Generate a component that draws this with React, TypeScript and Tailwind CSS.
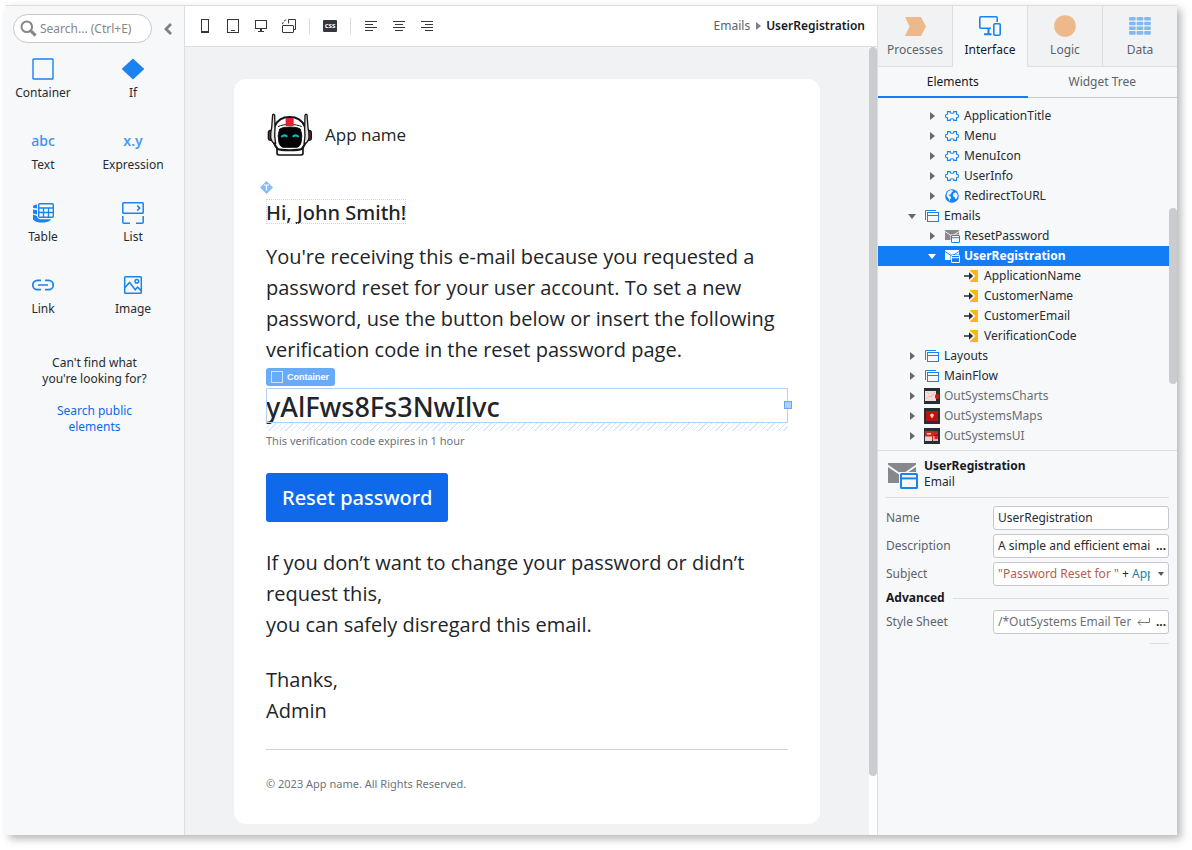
import { useState } from "react";
import type { ReactNode } from "react";

const BLUE = "#1a83f0";

/* ---------- Toolbox icons ---------- */

const ContainerIcon = () => (
  <svg width="22" height="22" viewBox="0 0 22 22" fill="none">
    <rect x="1" y="1" width="20" height="20" rx="0.6" stroke={BLUE} strokeWidth="1.4" />
  </svg>
);

const IfIcon = () => (
  <svg width="24" height="22" viewBox="0 0 24 22">
    <path d="M12 0.4 23.3 11 12 21.6 0.7 11Z" fill={BLUE} />
  </svg>
);

const TableIcon = () => (
  <svg width="22" height="22" viewBox="0 0 22 22" fill="none">
    <path d="M5 2.6C3 3 1 3.600 1 4.600v1.200l4 .8ZM5 8.200 1 7.600v4l4 .8ZM5 14l-4-1.400v4.800C3 20 8 20.800 11 20.500c3.400 0 7-1 8-3.200H8.500C6.500 17 5 16 5 14Z" fill={BLUE} />
    <rect x="6.700" y="1.700" width="14.600" height="13.600" rx="1" fill="#f6f8fa" stroke={BLUE} strokeWidth="1.400" />
    <path d="M7 6h14M7 10.500h14M11.500 6v9M16.500 6v9" stroke={BLUE} strokeWidth="1.300" />
  </svg>
);

const ListIcon = () => (
  <svg width="22" height="22" viewBox="0 0 22 22" fill="none" stroke={BLUE} strokeWidth="1.500">
    <rect x="0.800" y="0.800" width="20.400" height="10.400" rx="0.800" />
    <path d="m15.200 3.600 2.500 2.500-2.500 2.500" />
    <path d="M.800 14v6.200q0 1 1 1H8M21.200 14v6.200q0 1-1 1H14" />
  </svg>
);

const LinkIcon = () => (
  <svg width="22" height="12" viewBox="0 0 22 12" fill="none" stroke={BLUE} strokeWidth="1.700">
    <path d="M9 1.300H5.500a4.700 4.700 0 0 0 0 9.400H9M13 1.300h3.500a4.700 4.700 0 0 1 0 9.400H13M6 6h10" />
  </svg>
);

const ImageIcon = () => (
  <svg width="20" height="20" viewBox="0 0 20 20" fill="none" stroke={BLUE} strokeWidth="1.500">
    <rect x="1.700" y="1.700" width="16.600" height="16.600" rx="0.800" />
    <circle cx="13.800" cy="6.200" r="1.800" />
    <path d="m2 12.500 4.600-5 5.700 7.200 2.200-2.600 3.800 3.500" />
  </svg>
);

const tools: { label: string; icon: ReactNode }[] = [
  { label: "Container", icon: <ContainerIcon /> },
  { label: "If", icon: <IfIcon /> },
  { label: "Text", icon: <span className="text-sm font-medium text-[#3d92ee]">abc</span> },
  { label: "Expression", icon: <span className="text-sm font-semibold text-[#4b9af0]">x.y</span> },
  { label: "Table", icon: <TableIcon /> },
  { label: "List", icon: <ListIcon /> },
  { label: "Link", icon: <LinkIcon /> },
  { label: "Image", icon: <ImageIcon /> },
];

function Toolbox() {
  return (
    <aside className="w-[180px] shrink-0 border-r border-[#dcdee0] bg-[#f6f8fa]">
      <div className="flex items-center gap-2 pl-2 pt-2">
        <label className="flex h-[29px] w-[139px] items-center rounded-full border border-[#c6c8cb] bg-white pl-1.5">
          <svg width="17" height="17" viewBox="0 0 17 17" fill="none" stroke="#868789">
            <circle cx="6.800" cy="6.800" r="5.300" strokeWidth="2" />
            <path d="m10.600 10.600 5 5" strokeWidth="3" />
          </svg>
          <input
            type="text"
            aria-label="Search elements"
            placeholder="Search... (Ctrl+E)"
            className="ml-[3px] w-[108px] bg-transparent text-xs text-[#333] outline-none placeholder:text-[#85878a]"
          />
        </label>
        <button type="button" aria-label="Collapse toolbox" className="flex h-6 w-4 items-center justify-center">
          <svg width="10" height="12" viewBox="0 0 10 12" fill="none" stroke="#7e8082" strokeWidth="2.800">
            <path d="M8 1 3 6l5 5" />
          </svg>
        </button>
      </div>
      <div className="mt-3.5 grid grid-cols-[76px_76px] gap-x-3.5 gap-y-7">
        {tools.map((t) => (
          <button key={t.label} type="button" className="flex flex-col items-center gap-1">
            <span className="flex h-6 items-center justify-center">{t.icon}</span>
            <span className="text-xs leading-4 text-[#272b30]">{t.label}</span>
          </button>
        ))}
      </div>
      <p className="mt-[38px] text-center text-xs leading-4 text-[#272b30]">
        Can't find what
        <br />
        you're looking for?
      </p>
      <p className="mt-4 text-center text-xs leading-4">
        <a href="#public" className="text-[#1068eb]">
          Search public
          <br />
          elements
        </a>
      </p>
    </aside>
  );
}

/* ---------- Toolbar ---------- */

const PhoneIcon = () => (
  <svg width="8" height="14" viewBox="0 0 8 14">
    <path d="M0 0h8v14H0ZM1 1v11h6V1Z" fillRule="evenodd" fill="#34373b" />
  </svg>
);
const TabletIcon = () => (
  <svg width="12" height="14" viewBox="0 0 12 14">
    <path d="M0 0h12v14H0ZM1 1v12h10V1ZM4 11h4v1H4Z" fillRule="evenodd" fill="#34373b" />
  </svg>
);
const DesktopIcon = () => (
  <svg width="12" height="12" viewBox="0 0 12 12" fill="#34373b">
    <path d="M0 0h12v9H0ZM1 1v7h10V1Z" fillRule="evenodd" />
    <path d="M5 9h2v2h2v1H3v-1h2Z" />
  </svg>
);
const OrientationIcon = () => (
  <svg width="14" height="14" viewBox="0 0 14 14" fill="none" stroke="#34373b">
    <rect x="0.500" y="6.500" width="11" height="7" rx="0.500" />
    <path d="M6.500 4.500v-4h7v10H12" />
    <path d="M.500 5.200C.800 3 2.500 1.200 4.800.600" strokeDasharray="2.500 1" />
  </svg>
);
const CssIcon = () => (
  <svg width="14" height="12" viewBox="0 0 14 12">
    <rect width="14" height="12" rx="1" fill="#34373b" />
    <text x="7" y="8" textAnchor="middle" fontSize="6" fontWeight="800" fill="#fff" fontFamily="Noto Sans, sans-serif">
      CSS
    </text>
  </svg>
);
const AlignIcon = ({ starts }: { starts: number }) => (
  <svg width="12" height="10" viewBox="0 0 12 10" fill="#34373b">
    <path d={`M0 0h12v1H0ZM${starts} 3h8v1h-8ZM0 6h12v1H0ZM${starts} 9h8v1h-8Z`} />
  </svg>
);

function ToolButton({ label, children }: { label: string; children: ReactNode }) {
  return (
    <button type="button" aria-label={label} className="flex h-7 w-7 items-center justify-center">
      {children}
    </button>
  );
}
const Separator = () => (
  <span className="flex w-[13px] justify-center">
    <span className="h-4 w-px bg-[#d9dbdd]" />
  </span>
);

function Toolbar() {
  return (
    <div className="flex h-[41px] items-center border-b border-[#dcdee0] bg-white pl-1.5 pr-3">
      <ToolButton label="Phone"><PhoneIcon /></ToolButton>
      <ToolButton label="Tablet"><TabletIcon /></ToolButton>
      <ToolButton label="Desktop"><DesktopIcon /></ToolButton>
      <ToolButton label="Rotate"><OrientationIcon /></ToolButton>
      <Separator />
      <ToolButton label="Style sheet"><CssIcon /></ToolButton>
      <Separator />
      <ToolButton label="Align left"><AlignIcon starts={0} /></ToolButton>
      <ToolButton label="Align center"><AlignIcon starts={2} /></ToolButton>
      <ToolButton label="Align right"><AlignIcon starts={4} /></ToolButton>
      <nav aria-label="Breadcrumb" className="ml-auto flex items-center text-xs">
        <a href="#emails" className="text-[#5d6269]">Emails</a>
        <svg className="ml-1.5 mr-[5px]" width="5" height="8" viewBox="0 0 5 8">
          <path d="M0 0 5 4 0 8Z" fill="#7c8187" />
        </svg>
        <span className="font-semibold text-[#16191d]">UserRegistration</span>
      </nav>
    </div>
  );
}

/* ---------- Email canvas ---------- */

const RobotLogo = () => (
  <svg width="46" height="44" viewBox="0 0 138 132" stroke="#151515" strokeLinejoin="round">
    <rect x="4" y="52" width="14" height="30" rx="7" fill="#8f2028" strokeWidth="4" />
    <rect x="119" y="52" width="14" height="30" rx="7" fill="#8f2028" strokeWidth="4" />
    <path d="M30 104v17q0 5 6 5h66q6 0 6-5v-17Z" fill="#fff" strokeWidth="5" />
    <path d="M68 12c22 0 37 9 45 28 9 26 7 50-9 68-10 5-62 5-72 0C16 90 14 66 23 40c8-19 23-28 45-28Z" fill="#fff" strokeWidth="6" />
    <path d="M33 41c16-9 54-9 71 0" fill="none" strokeWidth="3" />
    <path d="M56 15h24v24H56Z" fill="#dd2430" stroke="none" />
    <path d="M17 5q4-3 6 2l1 40q-3 22 2 46-13-4-15-20-1-16 3-28ZM120 5q-4-3-6 2l-1 40q3 22-2 46 13-4 15-20 1-16-3-28Z" fill="#e4e4e4" strokeWidth="4" />
    <path d="M38 48q8-6 31-6t31 6q8 20 2 41-4 14-15 14H51q-11 0-15-14-6-21 2-41Z" fill="#020304" strokeWidth="3" />
    <path d="M43 72q9-9 18-1M77 71q9-8 18 1" fill="none" stroke="#16b9c4" strokeWidth="6" />
  </svg>
);

function EmailCard() {
  return (
    <article className="mx-auto w-full max-w-[586px] rounded-xl bg-white px-8 pb-[30px] pt-8 font-['Open_Sans','Noto_Sans',sans-serif] text-xl leading-[31px] text-[#212529]">
      <header className="flex h-12 items-center gap-3 pl-px">
        <RobotLogo />
        <span className="text-[17px] leading-6">App name</span>
      </header>

      <div className="relative mt-10">
        <svg className="absolute -left-1.5 -top-[18px]" width="13" height="13" viewBox="0 0 13 13">
          <path d="M6.500 0 13 6.500 6.500 13 0 6.500Z" fill="#86bcf8" />
          <path d="M4 4h5M6.500 4v5.500" stroke="#fff" strokeWidth="1.200" />
        </svg>
        <h1 className="h-[25px] w-fit font-['Noto_Sans',sans-serif] text-xl font-medium leading-7 outline-1 -outline-offset-1 outline-dotted outline-[#cfd1d4]">
          Hi, John Smith!
        </h1>
      </div>

      <p className="mt-[17px]">
        You're receiving this e-mail because you requested a password reset for your user account. To set a new
        password, use the button below or insert the following verification code in the reset password page.
      </p>

      <div className="relative mt-[23px]">
        <span className="absolute -top-5 left-0 flex h-[18px] w-[69px] items-center gap-1 rounded-[3px] bg-[#6aabf7] pl-[5px] font-['Liberation_Sans',sans-serif] text-[9px] font-bold text-white">
          <span className="h-3 w-3 border border-[#cfe4fd]" />
          Container
        </span>
        <div className="h-[35px] font-['Noto_Sans',sans-serif] text-[27px] font-medium leading-[38px] outline-1 -outline-offset-1 outline-solid outline-[#aed2fb]">
          yAlFws8Fs3NwIlvc
        </div>
        <span className="absolute -right-1 top-[13px] h-2 w-2 border border-[#67a8f5] bg-[#aed2fb]" />
        <div className="h-2 bg-[repeating-linear-gradient(135deg,#fff_0_3px,#d5e8fd_3px_4px)]" />
      </div>
      <p className="font-['Noto_Sans',sans-serif] text-[11px] leading-5 text-[#6c757d]">
        This verification code expires in 1 hour
      </p>

      <button type="button" className="mt-[22px] block h-[49px] rounded-[3px] bg-[#1068eb] px-4 font-['Noto_Sans',sans-serif] text-xl font-medium text-white">
        Reset password
      </button>

      <p className="mt-[25px]">
        If you don’t want to change your password or didn’t request this,
        <br />
        you can safely disregard this email.
      </p>
      <p className="mt-6">
        Thanks,
        <br />
        Admin
      </p>
      <hr className="mt-[23px] border-[#cfd1d4]" />
      <footer className="mt-6 font-['Noto_Sans',sans-serif] text-[11px] leading-5 text-[#6c757d]">
        © 2023 App name. All Rights Reserved.
      </footer>
    </article>
  );
}

/* ---------- Right panel ---------- */

const layerIcons: Record<string, ReactNode> = {
  Processes: (
    <svg width="21" height="19" viewBox="0 0 21 19">
      <path d="M0 0h16l5 9.500-5 9.500H0l4.500-9.500Z" fill="#edb98a" />
    </svg>
  ),
  Interface: (
    <svg width="22" height="20" viewBox="0 0 22 20" fill="none" stroke={BLUE} strokeWidth="1.600">
      <path d="M18.200 6V1.800q0-1-1-1H1.800q-1 0-1 1v9.400q0 1 1 1H12" />
      <path d="M9.500 12.500v5M5 18.200h7.500" strokeWidth="2" />
      <rect x="14.800" y="7.800" width="6.400" height="11.400" rx="1" />
    </svg>
  ),
  Logic: (
    <svg width="22" height="22" viewBox="0 0 22 22">
      <circle cx="11" cy="11" r="10.800" fill="#edb98a" />
    </svg>
  ),
  Data: (
    <svg width="22" height="18" viewBox="0 0 22 18" fill="#84b8f2">
      {[0, 4.7, 9.4, 14.1].map((y) =>
        [0, 7.6, 15.2].map((x) => <rect key={`${x}-${y}`} x={x} y={y} width="6.7" height="3.6" rx="1" />)
      )}
    </svg>
  ),
};

const BlockIcon = () => (
  <svg width="14" height="10" viewBox="0 0 14 10" fill="none" stroke={BLUE} strokeWidth="1.100">
    <path d="M2.500.600H5.200q-.300 1.700 1.800 1.700T8.800.600h2.700V3.200q2-.200 2 1.800t-2 1.800v2.600H8.800Q9.100 7.700 7 7.700T5.200 9.400H2.500V6.800q-2 .2-2-1.800t2-1.800Z" />
  </svg>
);
const GlobeIcon = () => (
  <svg width="14" height="14" viewBox="0 0 14 14">
    <circle cx="7" cy="7" r="6.800" fill={BLUE} />
    <path d="M6 .900 8.400 2 6.500 3.500 6 5 3.800 6 5.500 7.500 6.300 9 5 10.200v2.300L3.600 9.800 1.600 7l.300-2.500L3.200 2.300ZM8.200 4.800l2-1.600 2 1.200.6 2.600-1 2.400-1.400.8-.7-2-1.700-1Z" fill="#eaf4fe" />
  </svg>
);
const FlowIcon = () => (
  <svg width="14" height="12" viewBox="0 0 14 12" fill="none" stroke={BLUE}>
    <path d="M.500 10V.500H11" />
    <rect x="2.500" y="2.500" width="11" height="9" />
    <path d="M3 5.500h10" />
  </svg>
);
const MailIcon = ({ body, frame, bg, size = 15 }: { body: string; frame: string; bg: string; size?: number }) => (
  <svg width={size} height={(size * 13) / 15} viewBox="0 0 15 13" fill="none">
    <path d="M0 0h14v10H0Z" fill={body} />
    <path d="m-.200 1.300 7.200 4.900 7.200-4.900" stroke={bg} strokeWidth="0.900" />
    <rect x="5.500" y="4.500" width="9.500" height="8.500" fill={bg} />
    <rect x="6.500" y="5.500" width="8" height="7" stroke={frame} rx="0.300" />
    <path d="M6.500 7.700h8" stroke={frame} />
  </svg>
);
const ParamIcon = () => (
  <svg width="16" height="12" viewBox="0 0 16 12" fill="none">
    <path d="M6 0h8v12H6Z" fill="#fdb515" />
    <path d="m5.500 .300 5.800 5.700-5.800 5.700Z" fill="#f6f8fa" />
    <path d="M0 5.200h5V2.300L9.200 6 5 9.700V6.800H0Z" fill="#272b30" />
  </svg>
);
const ModuleIcon = ({ kind }: { kind: string }) => (
  <svg width="16" height="16" viewBox="0 0 16 16">
    <rect width="16" height="16" fill="#252d35" />
    {kind === "charts" && (
      <>
        <rect x="1" y="3" width="11" height="10" fill="#f3dcda" />
        <path d="m2 11 3-3 2 1 4-5M3 4l2 2" stroke="#ebb5b0" fill="none" />
        <rect x="11" y="6" width="4.500" height="5" rx="2" fill="#cf1c0e" />
      </>
    )}
    {kind === "maps" && (
      <>
        <rect x="2" y="3" width="12" height="10" fill="#b91509" />
        <path d="M8 5.500a1.800 1.800 0 0 1 1.800 1.800c0 1.200-1.800 3-1.800 3S6.200 8.500 6.200 7.300A1.800 1.800 0 0 1 8 5.500Z" fill="#f6c9c4" />
      </>
    )}
    {kind === "ui" && (
      <>
        <rect x="1" y="3" width="9" height="9" fill="#d0281b" />
        <path d="M1 8.500h7V13H1ZM3 5h4v1.500H3Z" fill="#f0d1cd" />
        <rect x="10" y="3" width="4" height="4" rx="1.500" fill="#d0281b" />
        <path d="M9 8h5v5H9Z" fill="#e9a7a0" />
        <rect x="10.500" y="8" width="3.500" height="3" rx="1" fill="#d0281b" />
      </>
    )}
  </svg>
);

type Kind = "block" | "globe" | "flow" | "mail" | "param" | "charts" | "maps" | "ui";
type Node = { label: string; level: 1 | 2 | 3; kind: Kind; open?: boolean; selected?: boolean; muted?: boolean };

const tree: Node[] = [
  { label: "ApplicationTitle", level: 2, kind: "block" },
  { label: "Menu", level: 2, kind: "block" },
  { label: "MenuIcon", level: 2, kind: "block" },
  { label: "UserInfo", level: 2, kind: "block" },
  { label: "RedirectToURL", level: 2, kind: "globe" },
  { label: "Emails", level: 1, kind: "flow", open: true },
  { label: "ResetPassword", level: 2, kind: "mail" },
  { label: "UserRegistration", level: 2, kind: "mail", open: true, selected: true },
  { label: "ApplicationName", level: 3, kind: "param" },
  { label: "CustomerName", level: 3, kind: "param" },
  { label: "CustomerEmail", level: 3, kind: "param" },
  { label: "VerificationCode", level: 3, kind: "param" },
  { label: "Layouts", level: 1, kind: "flow" },
  { label: "MainFlow", level: 1, kind: "flow" },
  { label: "OutSystemsCharts", level: 1, kind: "charts", muted: true },
  { label: "OutSystemsMaps", level: 1, kind: "maps", muted: true },
  { label: "OutSystemsUI", level: 1, kind: "ui", muted: true },
];

const indent = { 1: "pl-6", 2: "pl-11", 3: "pl-16" };

function NodeIcon({ node }: { node: Node }) {
  switch (node.kind) {
    case "block":
      return <BlockIcon />;
    case "globe":
      return <GlobeIcon />;
    case "flow":
      return <FlowIcon />;
    case "mail":
      return node.selected ? (
        <MailIcon body="#fff" frame="#fff" bg="#137df5" />
      ) : (
        <MailIcon body="#86888b" frame={BLUE} bg="#f6f8fa" />
      );
    case "param":
      return <ParamIcon />;
    default:
      return <ModuleIcon kind={node.kind} />;
  }
}

function TreeRow({ node }: { node: Node }) {
  const tone = node.selected
    ? "bg-[#137df5] font-bold text-white"
    : node.muted
      ? "text-[#6a6f75]"
      : "text-[#272b30]";
  const arrow = node.selected ? "#fff" : "#65696e";
  return (
    <li
      role="treeitem"
      aria-selected={!!node.selected}
      className={`flex h-5 items-center text-xs ${indent[node.level]} ${tone}`}
    >
      <span className="flex w-5 justify-center">
        {node.level !== 3 &&
          (node.open ? (
            <svg width="8" height="5" viewBox="0 0 8 5"><path d="M0 0h8L4 5Z" fill={arrow} /></svg>
          ) : (
            <svg width="5" height="8" viewBox="0 0 5 8"><path d="M0 0 5 4 0 8Z" fill={arrow} /></svg>
          ))}
      </span>
      <span className="flex w-5 justify-center">
        <NodeIcon node={node} />
      </span>
      <span className="ml-0.5">{node.label}</span>
    </li>
  );
}

const boxClass =
  "flex h-6 min-w-0 flex-1 items-center overflow-hidden rounded-[3px] border border-[#c6c8cb] bg-white pl-1 text-xs text-[#272b30]";
const labelClass = "w-[107px] shrink-0 text-xs text-[#5d6269]";

function Properties() {
  const [name, setName] = useState("UserRegistration");
  const [description, setDescription] = useState("A simple and efficient email");
  const [css, setCss] = useState("/*OutSystems Email Template");
  return (
    <section className="border-t border-[#dcdee0] px-2">
      <div className="flex h-[47px] items-center border-b border-[#dcdee0]">
        <span className="flex w-[38px] items-center pl-0.5 pt-1">
          <MailIcon body="#86888b" frame={BLUE} bg="#f6f8fa" size={30} />
        </span>
        <div className="text-xs leading-4 text-[#272b30]">
          <h2 className="font-bold text-[#16191d]">UserRegistration</h2>
          <p>Email</p>
        </div>
      </div>
      <div className="mt-2 flex flex-col gap-1">
        <div className="flex items-center">
          <label htmlFor="prop-name" className={labelClass}>Name</label>
          <div className={boxClass}>
            <input id="prop-name" value={name} onChange={(e) => setName(e.target.value)} className="w-full outline-none" />
          </div>
        </div>
        <div className="flex items-center">
          <label htmlFor="prop-description" className={labelClass}>Description</label>
          <div className={boxClass}>
            <input
              id="prop-description"
              value={description}
              onChange={(e) => setDescription(e.target.value)}
              className="min-w-0 flex-1 outline-none"
            />
            <button type="button" aria-label="Edit description" className="ml-1.5 w-3 text-left font-bold">...</button>
          </div>
        </div>
        <div className="flex items-center">
          <span id="prop-subject" className={labelClass}>Subject</span>
          <button type="button" aria-labelledby="prop-subject" className={boxClass}>
            <span className="min-w-0 flex-1 overflow-hidden whitespace-pre text-left">
              <span className="text-[#b4604e]">"Password Reset for "</span> + <span className="text-[#1c82a6]">App</span>
            </span>
            <svg className="ml-2 mr-1" width="6" height="4" viewBox="0 0 6 4">
              <path d="M0 0h6L3 4Z" fill="#54585d" />
            </svg>
          </button>
        </div>
      </div>
      <div className="flex h-6 items-center gap-2">
        <h3 className="text-xs font-bold text-[#16191d]">Advanced</h3>
        <span className="h-px flex-1 bg-[#dcdee0]" />
      </div>
      <div className="flex items-center">
        <label htmlFor="prop-css" className={labelClass}>Style Sheet</label>
        <div className={boxClass}>
          <input
            id="prop-css"
            value={css}
            onChange={(e) => setCss(e.target.value)}
            className="min-w-0 flex-1 text-[#6a6f75] outline-none"
          />
          <svg className="ml-1.5" width="13" height="8" viewBox="0 0 13 8" fill="none" stroke="#77797c">
            <path d="M12.500 0v4.500H1M4 1.500l-3 3 3 3" />
          </svg>
          <button type="button" aria-label="Edit style sheet" className="ml-1.5 w-3 text-left font-bold">...</button>
        </div>
      </div>
      <span className="ml-auto mt-[9px] block h-px w-[19px] bg-[#dcdee0]" />
    </section>
  );
}

function RightPanel() {
  return (
    <aside className="flex w-[300px] shrink-0 flex-col border-l border-[#dcdee0] bg-[#f6f8fa]">
      <div className="flex" role="tablist" aria-label="Layers">
        {["Processes", "Interface", "Logic", "Data"].map((name) => (
          <button
            key={name}
            type="button"
            role="tab"
            aria-selected={name === "Interface"}
            className={`flex h-[61px] flex-1 flex-col items-center border-b border-r pt-2 text-xs last:border-r-0 ${
              name === "Interface"
                ? "border-b-transparent border-r-[#dcdee0] text-[#16191d]"
                : "border-[#dcdee0] bg-[#f1f2f3] text-[#5d6269]"
            }`}
          >
            <span className="flex h-6 items-center">{layerIcons[name]}</span>
            <span className="mt-1 leading-4">{name}</span>
          </button>
        ))}
      </div>
      <div className="flex h-[31px] text-xs" role="tablist" aria-label="Views">
        <button type="button" role="tab" aria-selected="true" className="flex-1 border-b-2 border-[#137df5] text-[#16191d]">
          Elements
        </button>
        <button type="button" role="tab" aria-selected="false" className="flex-1 border-b border-[#c6c8cb] text-[#5d6269]">
          Widget Tree
        </button>
      </div>
      <div className="flex">
        <ul role="tree" aria-label="Elements" className="flex-1 pb-1 pt-2">
          {tree.map((n) => (
            <TreeRow key={n.label + n.level} node={n} />
          ))}
        </ul>
        <div className="w-2 pt-[110px]">
          <div className="h-[176px] rounded-full bg-[#cbccd0]" />
        </div>
      </div>
      <Properties />
    </aside>
  );
}

export default function App() {
  return (
    <div className="flex min-h-screen bg-white pb-[15px] pl-[5px] pr-[15px] pt-[5px] font-['Noto_Sans',sans-serif]">
      <div className="flex flex-1 border-t border-[#dcdee0] shadow-[4px_4px_8px_rgba(0,0,0,0.28)]">
        <Toolbox />
        <main className="flex min-w-0 flex-1 flex-col">
          <Toolbar />
          <div className="flex flex-1 bg-[#f1f2f4]">
            <div className="flex-1 pb-[11px] pt-8">
              <EmailCard />
            </div>
            <div className="flex w-2 flex-col bg-white pb-[59px]">
              <div className="flex-1 rounded-full bg-[#cbccd0]" />
            </div>
          </div>
        </main>
        <RightPanel />
      </div>
    </div>
  );
}
